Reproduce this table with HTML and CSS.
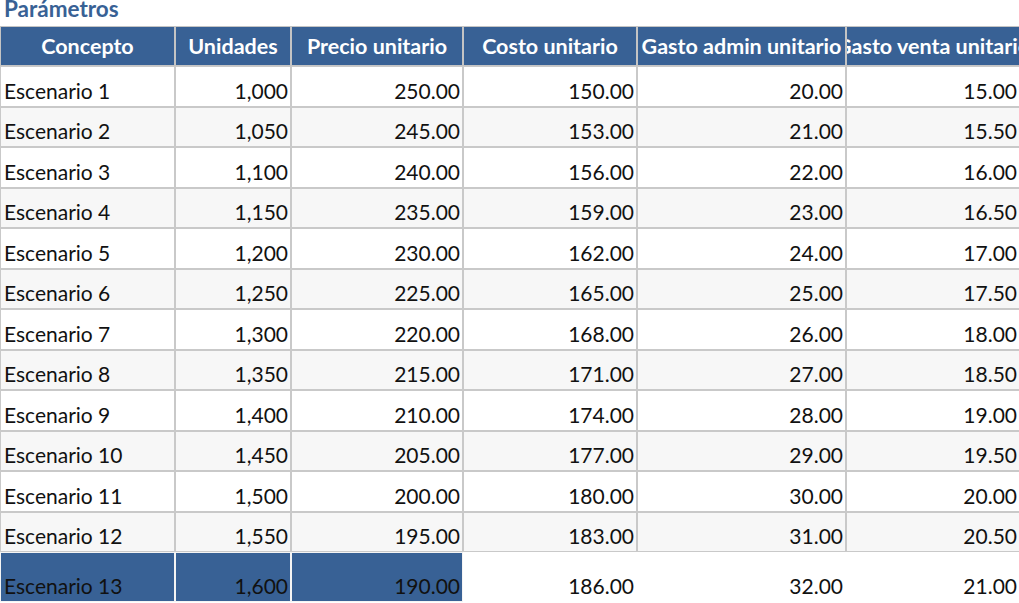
FILE: index.html
```html
<!DOCTYPE html>
<html lang="es">
<head>
<meta charset="utf-8">
<title>Parámetros</title>
<link rel="stylesheet" href="styles.css">
</head>
<body>
<h1 class="title">Parámetros</h1>
<table class="sheet">
  <colgroup>
    <col class="c1"><col class="c2"><col class="c3"><col class="c4"><col class="c5"><col class="c6">
  </colgroup>
  <thead>
    <tr>
      <th><span>Concepto</span></th>
      <th><span>Unidades</span></th>
      <th><span>Precio unitario</span></th>
      <th><span>Costo unitario</span></th>
      <th><span>Gasto admin unitario</span></th>
      <th><span>Gasto venta unitario</span></th>
    </tr>
  </thead>
  <tbody>
    <tr><td>Escenario 1</td><td>1,000</td><td>250.00</td><td>150.00</td><td>20.00</td><td>15.00</td></tr>
    <tr><td>Escenario 2</td><td>1,050</td><td>245.00</td><td>153.00</td><td>21.00</td><td>15.50</td></tr>
    <tr><td>Escenario 3</td><td>1,100</td><td>240.00</td><td>156.00</td><td>22.00</td><td>16.00</td></tr>
    <tr><td>Escenario 4</td><td>1,150</td><td>235.00</td><td>159.00</td><td>23.00</td><td>16.50</td></tr>
    <tr><td>Escenario 5</td><td>1,200</td><td>230.00</td><td>162.00</td><td>24.00</td><td>17.00</td></tr>
    <tr><td>Escenario 6</td><td>1,250</td><td>225.00</td><td>165.00</td><td>25.00</td><td>17.50</td></tr>
    <tr><td>Escenario 7</td><td>1,300</td><td>220.00</td><td>168.00</td><td>26.00</td><td>18.00</td></tr>
    <tr><td>Escenario 8</td><td>1,350</td><td>215.00</td><td>171.00</td><td>27.00</td><td>18.50</td></tr>
    <tr><td>Escenario 9</td><td>1,400</td><td>210.00</td><td>174.00</td><td>28.00</td><td>19.00</td></tr>
    <tr><td>Escenario 10</td><td>1,450</td><td>205.00</td><td>177.00</td><td>29.00</td><td>19.50</td></tr>
    <tr><td>Escenario 11</td><td>1,500</td><td>200.00</td><td>180.00</td><td>30.00</td><td>20.00</td></tr>
    <tr><td>Escenario 12</td><td>1,550</td><td>195.00</td><td>183.00</td><td>31.00</td><td>20.50</td></tr>
    <tr class="last">
      <td class="sel">Escenario 13</td><td class="sel">1,600</td><td class="sel">190.00</td>
      <td class="plain">186.00</td><td class="plain">32.00</td><td class="plain">21.00</td>
    </tr>
  </tbody>
</table>
</body>
</html>
```

FILE: styles.css
```css
html, body {
  margin: 0;
  padding: 0;
  background: #ffffff;
  overflow: hidden;
}
body {
  font-family: Lato, "Liberation Sans", sans-serif;
  color: #111111;
}
.title {
  margin: 0;
  padding: 0 0 0 4px;
  height: 26px;
  font-size: 22.5px;
  line-height: 17px;
  font-weight: 700;
  color: #386195;
}
.sheet {
  table-layout: fixed;
  width: 1020px;
  border-collapse: separate;
  border-spacing: 0;
  font-size: 21px;
}
.c1 { width: 175px; }
.c2 { width: 116px; }
.c3 { width: 172px; }
.c4 { width: 174px; }
.c5 { width: 209px; }
.c6 { width: 174px; }

.sheet th,
.sheet td {
  border: 1px solid #c9c9c9;
  overflow: hidden;
  white-space: nowrap;
  box-sizing: border-box;
}
.sheet th {
  height: 40px;
  padding: 0;
  background: #386195;
  color: #ffffff;
  font-weight: 700;
  font-size: 21.5px;
  border-color: #c4c4c4;
}
.sheet th span {
  display: flex;
  justify-content: center;
  align-items: center;
  height: 38px;
  overflow: hidden;
}
.sheet td {
  height: 40.5px;
  padding: 0 2px 3px 2px;
  vertical-align: bottom;
  text-align: right;
  line-height: 25px;
}
.sheet td:first-child {
  text-align: left;
  padding-left: 3px;
}
.sheet tbody tr:nth-child(even) td {
  background: #f7f7f7;
}
.sheet tr.last td {
  height: 50px;
  background: transparent;
  border-color: #ffffff;
}
.sheet tr.last td.sel {
  background: #386195;
  border-color: #f4f4f4;
}
```
